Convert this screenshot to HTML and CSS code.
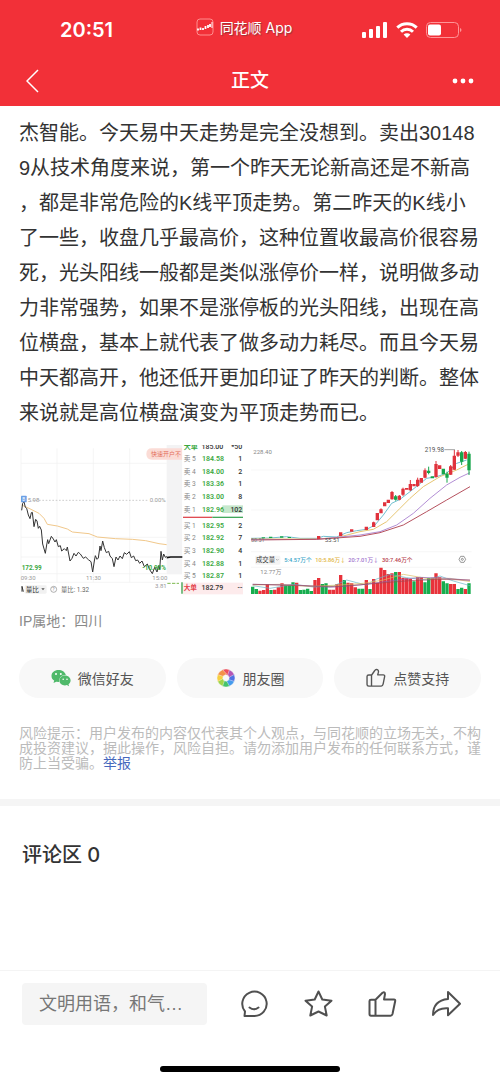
FILE: index.html
```html
<!DOCTYPE html>
<html lang="zh-CN">

<head>
  <meta charset="UTF-8" />
  <meta name="viewport" content="width=device-width, initial-scale=1.0" />
  <title>正文</title>
  <link rel="stylesheet" href="styles.css">
</head>

<body>
  <header class="header">
    <div class="status">
      <div class="clock">20:51</div>
      <div class="brand">
        <svg width="18" height="18" viewBox="0 0 18 18" fill="none">
          <rect x="1" y="1" width="16" height="16" rx="3" stroke="#ff8d8d" />
          <path d="M2 12.500V10.500M4.500 12V9.500M7 12V10M9.500 11V8M12 10V7M14 9V6" stroke="#fff" stroke-width="1.800" />
          <path d="M16 4v6" stroke="#fff" />
        </svg>
        <span>同花顺 App</span>
      </div>
      <div class="signals">
        <svg width="26" height="18" viewBox="0 0 26 18" fill="#fff">
          <rect x="0" y="11" width="4" height="6" rx="1" />
          <rect x="7" y="8" width="4" height="9" rx="1" />
          <rect x="14" y="5" width="4" height="12" rx="1" />
          <rect x="21" y="1" width="4" height="16" rx="1" />
        </svg>
        <svg width="22" height="18" viewBox="0 0 22 18" fill="none" stroke="#fff" stroke-width="3">
          <path d="M1.300 6.600a14 14 0 0 1 19.400 0M5 10.800a8.600 8.600 0 0 1 12 0" />
          <path d="M11 17 7.600 13.600a4.800 4.800 0 0 1 6.800 0z" fill="#fff" stroke="none" />
        </svg>
        <svg width="36" height="18" viewBox="0 0 36 18">
          <rect x=".5" y="1.500" width="32" height="15" rx="4" fill="none" stroke="#ff9497" />
          <rect x="2" y="3.500" width="13" height="11" rx="2" fill="#fff" />
          <path d="M34 7v4q1.500-.5 1.500-2T34 7z" fill="#ff9497" />
        </svg>
      </div>
    </div>
    <nav class="nav">
      <button class="icon-btn" aria-label="返回">
        <svg width="14" height="24" viewBox="0 0 14 24" fill="none" stroke="#fff" stroke-width="1.500"><path d="M12 1 1 12l11 11" /></svg>
      </button>
      <h1>正文</h1>
      <button class="icon-btn more" aria-label="更多">
        <svg width="22" height="6" viewBox="0 0 22 6" fill="#fff"><circle cx="3" cy="3" r="2.400" /><circle cx="11" cy="3" r="2.400" /><circle cx="19" cy="3" r="2.400" /></svg>
      </button>
    </nav>
  </header>

  <main>
    <article class="post">
      <p class="text">杰智能。今天易中天走势是完全没想到。卖出301489从技术角度来说，第一个昨天无论新高还是不新高，都是非常危险的K线平顶走势。第二昨天的K线小了一些，收盘几乎最高价，这种位置收最高价很容易死，光头阳线一般都是类似涨停价一样，说明做多动力非常强势，如果不是涨停板的光头阳线，出现在高位横盘，基本上就代表了做多动力耗尽。而且今天易中天都高开，他还低开更加印证了昨天的判断。整体来说就是高位横盘演变为平顶走势而已。</p>

      <div class="charts">
        <!-- 分时 + 五档 -->
        <svg class="chart" viewBox="0 0 675 450" role="img" aria-label="分时走势">
          <g fill="none" stroke="#f0f0f0" stroke-width="2">
            <path d="M6 10V412M114 10V412M223 10V412M332 10V412M6 55H443M6 277H443M6 336H443M6 386H443M6 412H443" />
          </g>
          <rect x="443" y="0" width="47" height="388" fill="#f3f3f4" />
          <path d="M40 166H390" stroke="#b5b5b5" stroke-width="2" stroke-dasharray="5 5" />
          <path d="M382 27q0-17 17-17h91v34h-91q-17 0-17-17z" fill="#fbdcd6" />
          <text x="396" y="34" font-size="18" fill="#e36f5c">快速开户不</text>
          <rect x="490" y="0" width="185" height="450" fill="#fff" />
          <path d="M8 180 30 190 60 205 75 220 85 238 115 243 145 252 160 261 210 266 235 276 290 281 340 283 380 287 420 296 443 299" fill="none" stroke="#f1c88b" stroke-width="3" />
          <path d="M8 196 11 175 15 170 19 187 23 190 28 210 33 221 37 203 40 202 45 245 50 223 54 228 58 250 62 244 67 255 71 297 79 325 83 300 86 284 89 296 97 274 103 282 108 291 112 284 118 305 124 302 128 318 136 311 142 317 145 306 153 348 159 340 165 325 171 333 178 322 184 327 193 340 200 336 208 344 216 350 221 381 226 348 229 332 234 343 238 339 243 303 246 317 251 288 256 308 262 323 269 319 273 333 280 341 285 365 291 336 297 345 303 333 310 341 316 323 323 328 331 320 337 338 344 333 350 347 356 345 362 355 369 348 376 365 385 357 392 374 400 386 407 367 414 381 419 362 422 374 426 319 430 345 434 327 439 337 443 334" fill="none" stroke="#333" stroke-width="3" />
          <path d="M443 338 455 336H490" fill="none" stroke="#111" stroke-width="5" />
          <rect x="6" y="152" width="17" height="20" rx="2" fill="#6b9fe5" />
          <text x="10" y="169" font-size="14" fill="#fff">B</text>
          <g font-size="18" fill="#999">
            <text x="26" y="171">5.98</text>
            <text x="392" y="171">0.00%</text>
            <text x="5" y="405">09:30</text>
            <text x="201" y="405">11:30</text>
            <text x="400" y="405">15:00</text>
            <text x="408" y="428">3.81</text>
          </g>
          <text x="8" y="375" font-size="19" font-weight="700" fill="#3aa83f">172.99</text>
          <text x="370" y="375" font-size="19" font-weight="700" fill="#3aa83f">-10.90%</text>
          <path d="M9 440V424l4 16" fill="none" stroke="#333" stroke-width="3" />
          <rect x="17" y="421" width="66" height="25" rx="4" fill="#f1f1f1" />
          <text x="20" y="441" font-size="20" fill="#333">量比</text>
          <path d="M67 430h10l-5 6z" fill="#555" />
          <circle cx="104" cy="433" r="9" fill="none" stroke="#888" stroke-width="2" />
          <text x="100" y="439" font-size="15" fill="#888">?</text>
          <text x="126" y="441" font-size="19" fill="#666">量比: 1.32</text>
          <path d="M445 415h35" stroke="#7bb84d" stroke-width="3" stroke-dasharray="10 4" />
          <path d="M489 412v34" stroke="#399d49" stroke-width="4" />
          <rect x="492" y="413" width="180" height="35" fill="#fdebec" />
          <rect x="610" y="181" width="62" height="23" fill="#c6e8cc" />
          <path d="M492 217H580" stroke="#df4d54" stroke-width="4" />
          <path d="M580 217H672" stroke="#42a85b" stroke-width="4" />
          <g font-size="20" fill="#888">
            <text x="494" y="48">卖 5</text><text x="494" y="86">卖 4</text>
            <text x="494" y="124">卖 3</text><text x="494" y="162">卖 2</text>
            <text x="494" y="200">卖 1</text><text x="494" y="248">买 1</text>
            <text x="494" y="286">买 2</text><text x="494" y="324">买 3</text>
            <text x="494" y="362">买 4</text><text x="494" y="400">买 5</text>
          </g>
          <g font-size="21" font-weight="600" fill="#3aa83f">
            <text x="494" y="12">大单</text>
            <text x="549" y="48">184.58</text><text x="549" y="86">184.00</text>
            <text x="549" y="124">183.36</text><text x="549" y="162">183.00</text>
            <text x="549" y="200">182.96</text><text x="549" y="248">182.95</text>
            <text x="549" y="286">182.92</text><text x="549" y="324">182.90</text>
            <text x="549" y="362">182.88</text><text x="549" y="400">182.87</text>
          </g>
          <g font-size="21" font-weight="500" fill="#333" text-anchor="end">
            <text x="613" y="12">185.00</text><text x="670" y="12">*50</text>
            <text x="670" y="48">1</text><text x="670" y="86">2</text>
            <text x="670" y="124">1</text><text x="670" y="162">8</text>
            <text x="670" y="200">102</text><text x="670" y="248">2</text>
            <text x="670" y="286">7</text><text x="670" y="324">4</text>
            <text x="670" y="362">1</text><text x="670" y="400">1</text>
            <text x="613" y="435">182.79</text><text x="670" y="435">--</text>
          </g>
          <text x="494" y="435" font-size="20" font-weight="600" fill="#e4454c">大单</text>
        </svg>

        <!-- 日K + 成交量 -->
        <svg class="chart" viewBox="0 0 675 450" role="img" aria-label="日K走势">
          <path d="M3 75H665M3 195H665M3 320H665M3 367H665" stroke="#f3f3f3" stroke-width="2" />
          <g fill="none" stroke-width="3">
            <path d="M3 280 60 279 110 275 150 280 200 280 220 274 260 276 290 263 320 257 350 253 375 240 400 210 425 175 450 163 480 140 530 100 560 95 590 85 620 55 650 45" stroke="#71bfd0" />
            <path d="M3 282 200 282 260 278 330 260 370 253 410 230 450 190 480 160 520 125 570 95 620 75 660 55" stroke="#e7c673" />
            <path d="M3 284 200 283 330 270 390 260 440 240 490 205 540 160 590 120 630 97 660 83" stroke="#b38fd5" />
            <path d="M3 285 200 283 330 274 390 263 460 240 530 200 590 165 660 125" stroke="#b6525f" />
          </g>
          <g fill="none" stroke="#e0323c" stroke-width="3">
            <path d="M371 230V246M393 190V204M426 138V164M448 150V166M459 128V153M481 105V138M503 98V126M525 70V100M558 48V98M602 60V90M613 15V75M624 15V36M646 18V42" />
            <path d="M206 273V282M272 262V273M305 253V260M349 245V255M371 232V246M382 204V226M393 193V205M404 172V184M415 164V174M426 141V163M448 152V164M459 131V149M470 129V134M481 117V136M492 117V124M503 104V123M514 99V113M525 76V98M558 57V96M569 61V72M602 64V89M613 32V74M624 22V32M646 21V41" stroke-width="10" />
          </g>
          <g fill="none" stroke="#17a64b" stroke-width="3">
            <path d="M437 150V167M536 65V88M591 80V113M635 18V60M657 20V90" />
            <path d="M40 277V280M62 275V279M95 274V278M118 276V279M437 154V164M536 77V84M547 94V100M580 71V88M591 86V98M635 22V50M657 26V76" stroke-width="10" />
          </g>
          <path d="M583 14h32" stroke="#777" stroke-width="2" />
          <text x="524" y="21" font-size="19" fill="#555">219.98</text>
          <text x="10" y="27" font-size="18" fill="#888">228.40</text>
          <text x="3" y="292" font-size="16" fill="#777">50.51</text>
          <text x="224" y="291" font-size="18" fill="#555">55.51</text>
          <rect x="15" y="332" width="76" height="27" rx="4" fill="#f4f4f4" />
          <text x="18" y="352" font-size="19" fill="#333">成交量</text>
          <path d="M78 342l4 4 4-4" fill="none" stroke="#999" stroke-width="2" />
          <g font-size="17" font-weight="500">
            <text x="103" y="352" fill="#37a5c8">5:4.57万个</text>
            <text x="196" y="352" fill="#e1b545">10:5.86万↓</text>
            <text x="295" y="352" fill="#a174cd">20:7.01万↓</text>
            <text x="396" y="352" fill="#b63d4c">30:7.46万个</text>
          </g>
          <text x="31" y="386" font-size="18" fill="#888">12.77万</text>
          <path d="M627 343 632 334H642L647 343 642 352H632Z" fill="none" stroke="#666" stroke-width="2" />
          <circle cx="637" cy="343" r="3" fill="none" stroke="#666" stroke-width="2" />
          <g fill="none" stroke-width="10">
            <path d="M30 447V437M41 447V435M52 447V417M74 447V434M85 447V427M96 447V415M140 447V413M195 447V405M206 447V399M239 447V434M250 447V434M261 447V417M272 447V390M294 447V413M305 447V415M316 447V427M349 447V405M371 447V402M382 447V413M393 447V368M404 447V375M415 447V387M426 447V385M448 447V381M459 447V398M470 447V400M481 447V402M503 447V397M514 447V397M547 447V398M558 447V385M569 447V397M602 447V417M613 447V417M646 447V432" stroke="#e8323b" />
            <path d="M8 447V425M19 447V432M63 447V435M107 447V421M118 447V421M129 447V412M151 447V435M162 447V434M173 447V431M184 447V438M217 447V417M228 447V415M283 447V405M327 447V431M338 447V431M360 447V432M437 447V381M492 447V409M525 447V412M536 447V399M580 447V409M591 447V415M624 447V432M635 447V428M657 447V415" stroke="#17ad4e" />
          </g>
          <g fill="none" stroke-width="2">
            <path d="M8 422 60 430 130 418 190 426 250 423 290 405 320 413 350 420 380 402 420 388 470 398 530 405 570 393 610 408 660 422" stroke="#62b4c4" />
            <path d="M8 420 90 418 180 424 270 420 340 415 400 405 460 388 540 402 600 400 660 410" stroke="#ddb95c" />
            <path d="M8 418 140 420 240 427 330 420 420 408 510 397 590 400 660 406" stroke="#8a62ad" />
            <path d="M8 418 150 422 260 425 370 416 480 407 560 403 660 405" stroke="#a04553" />
          </g>
        </svg>
      </div>

      <div class="location">IP属地：四川</div>

      <div class="share">
        <button>
          <svg width="20" height="18" viewBox="0 0 20 18">
            <path d="M7.500 1C3.500 1 .5 3.500.5 7c0 2 1 3.500 2.700 4.600L2.500 14l2.700-1.300 3 .4C7.500 9 10.500 5.800 14.800 5.900 14 3 11 1 7.500 1z" fill="#4fb96a" />
            <path d="M14 6.600c-3.200 0-5.600 2.200-5.600 4.900s2.400 4.900 5.600 4.900l1.900-.3 2.200 1.200-.6-2.100c1.400-1 2.100-2.200 2.100-3.700 0-2.700-2.400-4.900-5.600-4.900z" fill="#4fb96a" />
            <g fill="#fff"><circle cx="5" cy="5" r="1" /><circle cx="9.800" cy="5" r="1" /><circle cx="12.200" cy="10.300" r=".8" /><circle cx="16" cy="10.300" r=".8" /></g>
          </svg>
          微信好友
        </button>
        <button>
          <svg width="20" height="20" viewBox="-10 -10 20 20" stroke="#f8f8f8" stroke-width=".4">
            <path d="M-3.500-8.300A9 9 0 0 1 3.500-8.300L3.200-2.300-1-3.500Z" fill="#ee4f5b" />
            <path d="M-3.500-8.300A9 9 0 0 1 3.500-8.300L3.200-2.300-1-3.500Z" fill="#b457b5" transform="rotate(45)" />
            <path d="M-3.500-8.300A9 9 0 0 1 3.500-8.300L3.200-2.300-1-3.500Z" fill="#5272e2" transform="rotate(90)" />
            <path d="M-3.500-8.300A9 9 0 0 1 3.500-8.300L3.200-2.300-1-3.500Z" fill="#459bed" transform="rotate(135)" />
            <path d="M-3.500-8.300A9 9 0 0 1 3.500-8.300L3.200-2.300-1-3.500Z" fill="#45c36b" transform="rotate(180)" />
            <path d="M-3.500-8.300A9 9 0 0 1 3.500-8.300L3.200-2.300-1-3.500Z" fill="#a0d44a" transform="rotate(225)" />
            <path d="M-3.500-8.300A9 9 0 0 1 3.500-8.300L3.200-2.300-1-3.500Z" fill="#f7cf3f" transform="rotate(270)" />
            <path d="M-3.500-8.300A9 9 0 0 1 3.500-8.300L3.200-2.300-1-3.500Z" fill="#f4914a" transform="rotate(315)" />
          </svg>
          朋友圈
        </button>
        <button>
          <svg width="20" height="20" viewBox="0 0 29 28" fill="none" stroke="#555" stroke-width="2" stroke-linejoin="round">
            <path d="M8 10 12.500 3.500Q14 .8 16.500 2 18.500 3 18 5.500L17 9.500H25Q27.500 9.500 27 12L24.800 23Q24.300 25.700 22 25.700H4Q1.500 25.700 1.500 23.500V12Q1.500 9.700 4 9.700H8V25.700" />
          </svg>
          点赞支持
        </button>
      </div>

      <p class="notice">风险提示：用户发布的内容仅代表其个人观点，与同花顺的立场无关，不构成投资建议，据此操作，风险自担。请勿添加用户发布的任何联系方式，谨防上当受骗。<a href="#">举报</a></p>
    </article>

    <section class="comments">
      <h2>评论区 0</h2>
    </section>
  </main>

  <footer class="footer">
    <div class="toolbar">
      <input type="text" placeholder="文明用语，和气…" aria-label="发表评论" />
      <div class="actions">
        <button class="icon-btn" aria-label="评论">
          <svg width="29" height="28" viewBox="0 0 29 28"><path d="M14 26H4.500L5 21.500A12.200 12.200 0 1 1 14 26ZM9.500 17.500q4.500 3.500 9 0" /></svg>
        </button>
        <button class="icon-btn" aria-label="收藏">
          <svg width="29" height="28" viewBox="0 0 29 28"><path d="M14.500 1.500 18.300 9.500 27.500 10.700 20.900 16.600 22.700 25.500 14.500 21.500 6.300 25.500 8.100 16.600 1.500 10.700 10.700 9.500Z" /></svg>
        </button>
        <button class="icon-btn" aria-label="点赞">
          <svg width="29" height="28" viewBox="0 0 29 28"><path d="M7.500 9.700 14.500 2.800Q16.800 1.500 17 4L16 9.500H26Q27.500 9.500 27.200 11L24.500 24Q24 25.700 22.500 25.700H3Q1.500 25.700 1.500 24V11Q1.500 9.700 3 9.700H7.500V25.700" /></svg>
        </button>
        <button class="icon-btn" aria-label="分享">
          <svg width="29" height="28" viewBox="0 0 29 28"><path d="M16 2 28 13.700 16 25.300V18.300Q6 17.500 1 25 1 10.500 16 9Z" /></svg>
        </button>
      </div>
    </div>
    <div class="home-bar"></div>
  </footer>
</body>

</html>
```

FILE: styles.css
```css
* {
  box-sizing: border-box;
}

body {
  margin: 0;
  min-height: 100vh;
  display: flex;
  flex-direction: column;
  background-color: #ffffff;
  color: #333333;
  font-family: "Liberation Sans", "Noto Sans CJK SC", sans-serif;
}

button,
input {
  font-family: inherit;
  border: none;
}

h1,
h2,
p {
  margin: 0;
}

svg {
  display: block;
  flex-shrink: 0;
}

.header {
  background-color: #f23038;
  color: #ffffff;
}

.status {
  height: 56px;
  padding: 4px 38px 0 60px;
  display: grid;
  grid-template-columns: 1fr auto 1fr;
  align-items: center;
  font-family: Inter, "Noto Sans CJK SC", sans-serif;
}

.clock {
  font-size: 20px;
  font-weight: 600;
}

.brand {
  display: flex;
  align-items: center;
  gap: 6px;
  padding: 0 34px 6px 0;
  font-size: 14px;
  text-shadow: 1px 1px 1px #99333a;
}

.signals {
  display: flex;
  justify-content: flex-end;
  gap: 8px;
}

.nav {
  height: 50px;
  padding: 0 26px;
  display: flex;
  align-items: center;
  justify-content: space-between;
}

.nav h1 {
  font-size: 19px;
  font-weight: 500;
  line-height: 26px;
}

.icon-btn {
  padding: 0;
  background: none;
}

.nav .icon-btn {
  width: 22px;
}

main {
  flex: 1;
}

.post {
  padding: 10px 19px 28px;
}

.text {
  font-size: 20px;
  line-height: 35px;
  line-break: anywhere;
}

.charts {
  display: grid;
  grid-template-columns: 1fr 1fr;
  gap: 6px;
  margin: 14px 6px 16px 0;
}

.chart {
  width: 100%;
  font-family: "Roboto", "Noto Sans CJK SC", sans-serif;
}

.location {
  font-size: 14px;
  line-height: 20px;
  color: #8a8a8a;
}

.share {
  display: flex;
  gap: 11px;
  margin: 27px 0 28px;
}

.share button {
  flex: 1;
  height: 40px;
  padding: 0;
  display: flex;
  align-items: center;
  justify-content: center;
  gap: 7px;
  border-radius: 20px;
  background-color: #f8f8f8;
  color: #555555;
  font-size: 14px;
}

.notice {
  font-size: 14px;
  line-height: 15px;
  line-break: anywhere;
  color: #bbbbbb;
}

.notice a {
  color: #4668bd;
  text-decoration: none;
}

.comments {
  border-top: 7px solid #f5f5f5;
  padding: 34px 22px;
}

.comments h2 {
  font-size: 20px;
  font-weight: 500;
  line-height: 30px;
  font-family: Inter, "Noto Sans CJK SC", sans-serif;
}

.footer {
  border-top: 1px solid #f4f4f4;
}

.toolbar {
  display: flex;
  align-items: center;
  gap: 33px;
  padding: 12px 39px 0 22px;
}

.toolbar input {
  flex: 1;
  min-width: 0;
  height: 42px;
  padding: 0 17px;
  border-radius: 4px;
  background-color: #f5f5f5;
  font-size: 18px;
}

.toolbar input::placeholder {
  color: #777777;
}

.actions {
  display: flex;
  gap: 35px;
}

.actions svg {
  fill: none;
  stroke: #505050;
  stroke-width: 2px;
  stroke-linejoin: round;
  stroke-linecap: round;
}

.home-bar {
  width: 36%;
  height: 6px;
  margin: 41px auto 10px;
  border-radius: 3px;
  background-color: #000000;
}
```
